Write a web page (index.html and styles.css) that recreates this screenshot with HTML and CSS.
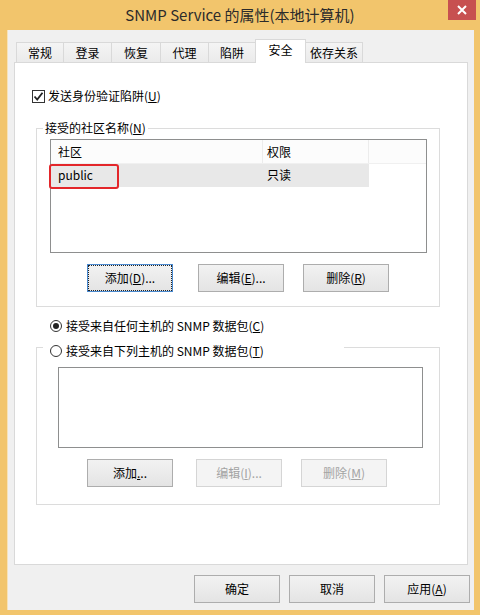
FILE: index.html
```html
<!DOCTYPE html>
<html lang="zh-CN">

<head>
    <meta charset="UTF-8">
    <title>SNMP Service 的属性</title>
    <link rel="stylesheet" href="styles.css">
</head>

<body>
    <div class="win">
        <!-- 标题栏 -->
        <div class="win_title">
            <span class="win_caption">SNMP Service 的属性(本地计算机)</span>
            <a href="javascript:;" class="win_close">
                <svg width="10" height="10" viewBox="0 0 10 10"><path d="M1 1L9 9M9 1L1 9" stroke="#fff" stroke-width="2"/></svg>
            </a>
        </div>
        <div class="win_client">
            <!-- 选项卡 -->
            <ul class="tabs">
                <li style="width:48px">常规</li>
                <li style="width:49px">登录</li>
                <li style="width:50px">恢复</li>
                <li style="width:49px">代理</li>
                <li style="width:48px">陷阱</li>
                <li class="active" style="width:51px">安全</li>
                <li style="width:58px">依存关系</li>
            </ul>
            <div class="panel">
                <label class="check_row">
                    <span class="checkbox">
                        <svg width="11" height="11" viewBox="0 0 11 11"><path d="M1.5 5.5L4.2 8.5L9.5 1.8" fill="none" stroke="#222" stroke-width="1.8"/></svg>
                    </span>
                    发送身份验证陷阱(<u>U</u>)
                </label>

                <!-- 社区名称 -->
                <div class="group group1">
                    <div class="legend">接受的社区名称(<u>N</u>)</div>
                    <div class="listview">
                        <div class="lv_head">
                            <span class="col1">社区</span>
                            <span class="col2">权限</span>
                        </div>
                        <div class="lv_row">
                            <span class="col1">public</span>
                            <span class="col2">只读</span>
                            <i class="mark"></i>
                        </div>
                    </div>
                    <div class="btn_row">
                        <a href="javascript:;" class="btn focus" style="margin-left:50px">添加(<u>D</u>)...</a>
                        <a href="javascript:;" class="btn" style="margin-left:25px">编辑(<u>E</u>)...</a>
                        <a href="javascript:;" class="btn" style="margin-left:19px">删除(<u>R</u>)</a>
                    </div>
                </div>

                <label class="radio_row">
                    <span class="radio on"></span>
                    接受来自任何主机的 SNMP 数据包(<u>C</u>)
                </label>

                <div class="group group2">
                    <label class="legend radio_legend">
                        <span class="radio"></span>
                        接受来自下列主机的 SNMP 数据包(<u>T</u>)
                    </label>
                    <div class="listbox"></div>
                    <div class="btn_row">
                        <a href="javascript:;" class="btn" style="margin-left:50px">添加<u>.</u>..</a>
                        <a href="javascript:;" class="btn disabled" style="margin-left:23px">编辑(<u>I</u>)...</a>
                        <a href="javascript:;" class="btn disabled" style="margin-left:19px">删除(<u>M</u>)</a>
                    </div>
                </div>
            </div>
            <!-- 底部按钮 -->
            <div class="foot">
                <a href="javascript:;" class="btn">确定</a>
                <a href="javascript:;" class="btn">取消</a>
                <a href="javascript:;" class="btn">应用(<u>A</u>)</a>
            </div>
        </div>
    </div>
</body>

</html>
```

FILE: styles.css
```css
* {
    margin: 0;
    padding: 0;
    box-sizing: border-box;
}

body {
    font-family: "Noto Sans CJK SC", "Liberation Sans", sans-serif;
    font-size: 12px;
    color: #000;
    background: #fff;
}

u {
    text-decoration: underline;
    text-underline-offset: 1px;
}

.win {
    width: 480px;
    height: 615px;
    background-color: #f2c56c;
    display: flex;
    flex-direction: column;
    padding: 0 6px 5px 7px;
}

/*标题栏*/

.win_title {
    height: 30px;
    margin: 0 -6px 0 -7px;
    position: relative;
    text-align: center;
}

.win_caption {
    display: block;
    font-size: 15px;
    line-height: 30px;
    color: #2b2b2b;
}

.win_close {
    position: absolute;
    top: 0;
    right: 4px;
    width: 28px;
    height: 20px;
    background-color: #c75050;
    display: flex;
    align-items: center;
    justify-content: center;
}

.win_client {
    flex: 1;
    background-color: #f0f0f0;
    padding: 9px 4px 0 6px;
    border-left: 1px solid #f7e3b8;
}

/*选项卡*/

.tabs {
    list-style-type: none;
    display: flex;
    align-items: flex-end;
    height: 23px;
    margin-left: 2px;
}

.tabs li {
    height: 20px;
    line-height: 19px;
    text-align: center;
    border: 1px solid #d9d9d9;
    border-bottom: none;
    background: linear-gradient(#f4f4f4, #ebebeb);
    margin-left: -1px;
}

.tabs li:first-child {
    margin-left: 0;
}

.tabs .active {
    height: 24px;
    line-height: 20px;
    margin-bottom: -1px;
    background: #fff;
    position: relative;
    z-index: 1;
}

.panel {
    width: 454px;
    height: 503px;
    background-color: #fff;
    border: 1px solid #d9d9d9;
    padding-top: 25px;
}

.check_row,
.radio_row {
    display: flex;
    align-items: center;
    height: 16px;
    line-height: 16px;
}

.check_row {
    padding-left: 17px;
}

.checkbox {
    width: 13px;
    height: 13px;
    border: 1px solid #333;
    margin-right: 3px;
    display: flex;
    align-items: center;
    justify-content: center;
}

.radio {
    width: 12px;
    height: 12px;
    border: 1px solid #333;
    border-radius: 50%;
    margin-right: 4px;
    display: flex;
    align-items: center;
    justify-content: center;
}

.radio.on:after {
    content: "";
    width: 6px;
    height: 6px;
    border-radius: 50%;
    background-color: #222;
}

/*分组框*/

.group {
    width: 404px;
    margin-left: 21px;
    border: 1px solid #dcdcdc;
}

.group1 {
    margin-top: 24px;
    padding-bottom: 14px;
}

.group2 {
    margin-top: 13px;
    padding-bottom: 17px;
}

.legend {
    display: block;
    width: max-content;
    height: 16px;
    line-height: 16px;
    margin: -9px 0 0 6px;
    padding: 0 2px;
    background-color: #fff;
}

.radio_legend {
    display: flex;
    align-items: center;
    width: 301px;
    margin-top: -5px;
    padding: 0 0 0 7px;
}

.radio_row {
    margin-top: 11px;
    padding-left: 35px;
}

.listview {
    width: 377px;
    height: 114px;
    margin: 3px 0 0 13px;
    border: 1px solid #8e8f8f;
}

.lv_head,
.lv_row {
    display: flex;
    position: relative;
}

.lv_head {
    height: 24px;
    line-height: 23px;
    background-color: #fcfcfc;
    border-bottom: 1px solid #f0f0f0;
}

.lv_row {
    height: 23px;
    line-height: 22px;
    width: 318px;
    background-color: #e8e8e8;
}

.col1 {
    width: 212px;
    padding-left: 7px;
}

.col2 {
    width: 106px;
    padding-left: 4px;
}

.lv_head .col1 {
    border-right: 1px solid #ececec;
}

.lv_head .col2 {
    border-right: 1px solid #ececec;
}

.mark {
    position: absolute;
    left: -2px;
    top: 0;
    width: 70px;
    height: 25px;
    border: 2px solid #e3262a;
    border-radius: 3px;
}

.listbox {
    width: 365px;
    height: 81px;
    margin: 8px 0 0 21px;
    border: 1px solid #8e8f8f;
}

/*按钮*/

.btn_row {
    display: flex;
    margin-top: 11px;
}

.btn {
    display: block;
    width: 86px;
    height: 28px;
    line-height: 26px;
    text-align: center;
    color: #000;
    text-decoration: none;
    border: 1px solid #adadad;
    background: linear-gradient(#f2f2f2, #e4e4e4);
}

.btn.focus {
    border-color: #4a8ad0;
    outline: 1px dotted #222;
    outline-offset: -2px;
}

.btn.disabled {
    color: #a3a3a3;
    border-color: #d5d5d5;
    background: #f4f4f4;
}

.foot {
    display: flex;
    justify-content: flex-end;
    gap: 9px;
    margin-top: 10px;
}
```
